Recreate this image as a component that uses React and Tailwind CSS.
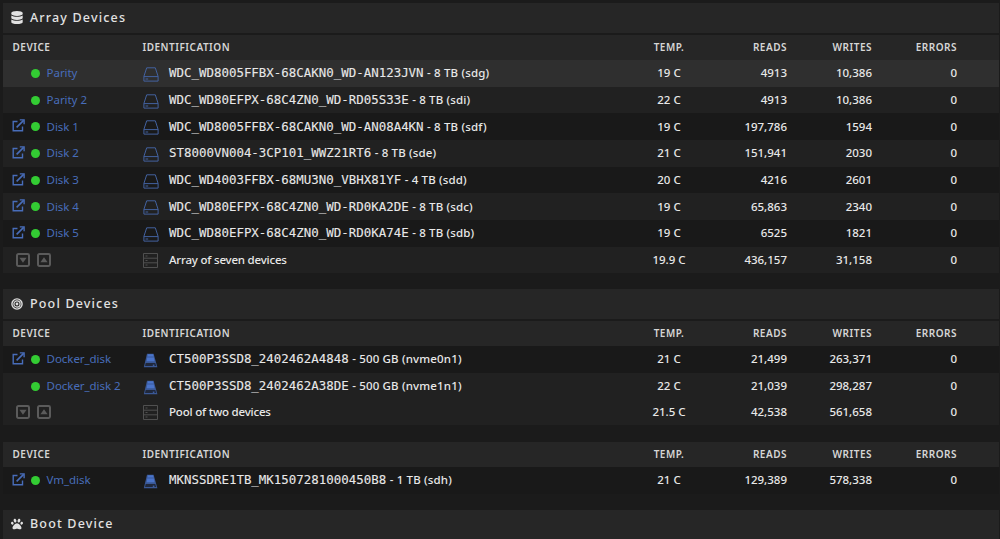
import { FaDatabase, FaPaw } from 'react-icons/fa';

const arrayDevices = [
  { name: 'Parity', serial: 'WDC_WD8005FFBX-68CAKN0_WD-AN123JVN', info: '- 8 TB (sdg)', temp: '19 C', reads: '4913', writes: '10,386', bg: 'bg-[#2f2f2f]' },
  { name: 'Parity 2', serial: 'WDC_WD80EFPX-68C4ZN0_WD-RD05S33E', info: '- 8 TB (sdi)', temp: '22 C', reads: '4913', writes: '10,386', bg: 'bg-[#212121]' },
  { name: 'Disk 1', serial: 'WDC_WD8005FFBX-68CAKN0_WD-AN08A4KN', info: '- 8 TB (sdf)', temp: '19 C', reads: '197,786', writes: '1594', bg: 'bg-[#191919]', browse: true },
  { name: 'Disk 2', serial: 'ST8000VN004-3CP101_WWZ21RT6', info: '- 8 TB (sde)', temp: '21 C', reads: '151,941', writes: '2030', bg: 'bg-[#212121]', browse: true },
  { name: 'Disk 3', serial: 'WDC_WD4003FFBX-68MU3N0_VBHX81YF', info: '- 4 TB (sdd)', temp: '20 C', reads: '4216', writes: '2601', bg: 'bg-[#191919]', browse: true },
  { name: 'Disk 4', serial: 'WDC_WD80EFPX-68C4ZN0_WD-RD0KA2DE', info: '- 8 TB (sdc)', temp: '19 C', reads: '65,863', writes: '2340', bg: 'bg-[#212121]', browse: true },
  { name: 'Disk 5', serial: 'WDC_WD80EFPX-68C4ZN0_WD-RD0KA74E', info: '- 8 TB (sdb)', temp: '19 C', reads: '6525', writes: '1821', bg: 'bg-[#191919]', browse: true },
];

const poolDevices = [
  { name: 'Docker_disk', serial: 'CT500P3SSD8_2402462A4848', info: '- 500 GB (nvme0n1)', temp: '21 C', reads: '21,499', writes: '263,371', bg: 'bg-[#191919]', browse: true, ssd: true },
  { name: 'Docker_disk 2', serial: 'CT500P3SSD8_2402462A38DE', info: '- 500 GB (nvme1n1)', temp: '22 C', reads: '21,039', writes: '298,287', bg: 'bg-[#212121]', ssd: true },
];

const vmDevices = [
  { name: 'Vm_disk', serial: 'MKNSSDRE1TB_MK1507281000450B8', info: '- 1 TB (sdh)', temp: '21 C', reads: '129,389', writes: '578,338', bg: 'bg-[#191919]', browse: true, ssd: true },
];

const columns = 'grid grid-cols-[139.5px_1fr_60px_88px_85px_85px_42px] items-center';

function BrowseIcon() {
  return (
    <svg className="size-[13px]" viewBox="0 0 13 13" fill="none" stroke="#486dba" strokeWidth="1.4">
      <path d="M5.5 2.5H1.2v9.3h9.3V7.5" />
      <path d="M4.6 8.4 11.6 1.4" strokeWidth="1.6" />
      <path d="M7.8.9h4.3v4.3" />
    </svg>
  );
}

function DiskIcon() {
  return (
    <svg className="h-[15px] w-4" viewBox="0 0 16 15" fill="none" stroke="#43629f">
      <path d="M3.7.8h8.6l2.8 8.6v4.7H.9V9.4z" />
      <path d="M.9 9.6h14.2M2.5 12h2.7" />
    </svg>
  );
}

function SsdIcon() {
  return (
    <svg className="h-[15px] w-4" viewBox="0 0 16 15">
      <path d="M4 .7h6.6l3.8 13.6H.8z" fill="#3a5896" />
      <path d="M4.9 1.3h5.2l1.5 6.9H3.6z" fill="#4a74c9" />
      <path d="M4.3 4h6.3" stroke="#304d89" strokeWidth=".7" />
      <path d="M2.7 9.9h9.6l.9 3H2z" fill="#20283b" />
      <path d="M9.8 12.2h1.6" stroke="#4a74c9" />
    </svg>
  );
}

function GroupIcon() {
  return (
    <svg className="h-[15px] w-[15px]" viewBox="0 0 15 15" fill="none" stroke="#505050">
      <path d="M.5.5h14v14H.5zM.5 5.2h14M.5 9.8h14M2.5 3h2M2.5 7.5h2M2.5 12h2" />
    </svg>
  );
}

function TargetIcon() {
  return (
    <svg className="size-3" viewBox="0 0 12 12" fill="none" stroke="#dedede">
      <circle cx="6" cy="6" r="5.1" strokeWidth="1.4" />
      <circle cx="6" cy="6" r="3.1" strokeWidth="1.2" />
      <circle cx="6" cy="6" r="1.4" fill="#dedede" stroke="none" />
    </svg>
  );
}

function ToggleIcon({ up }) {
  return (
    <svg className="size-[14px]" viewBox="0 0 14 14" fill="none" stroke="#5b5b5b" strokeWidth="2">
      <rect x="1" y="1" width="12" height="12" rx="1.4" />
      <path d={up ? 'M3.4 9.2 7 4.3 10.6 9.2z' : 'M3.4 4.8h7.2L7 9.7z'} fill="#5b5b5b" stroke="none" />
    </svg>
  );
}

function SectionTitle({ icon, children }) {
  return (
    <h2 className="flex h-[30px] items-center gap-[7px] bg-[#262626] pb-px pl-[7px] text-[12.5px] font-medium tracking-[1.17px] text-[#e2e2e2]">
      <span className="flex w-[13px] justify-center">{icon}</span>
      {children}
    </h2>
  );
}

function TableHead() {
  return (
    <div className={`${columns} h-[25px] bg-[#262626] pb-px text-[10px] font-semibold tracking-[0.5px] text-[#d6d6d6]`}>
      <span className="pl-[9.5px]">DEVICE</span>
      <span>IDENTIFICATION</span>
      <span className="text-center">TEMP.</span>
      <span className="text-right">READS</span>
      <span className="text-right">WRITES</span>
      <span className="text-right">ERRORS</span>
    </div>
  );
}

function Counters({ temp, reads, writes }) {
  return (
    <>
      <span className="text-center">{temp}</span>
      <span className="text-right">{reads}</span>
      <span className="text-right">{writes}</span>
      <span className="text-right">0</span>
    </>
  );
}

function DeviceRow({ device }) {
  return (
    <div className={`${columns} ${device.bg} h-[26.7px]`}>
      <div className="flex items-center pl-[9px] text-[#486dba]">
        <span className="mb-[2px] w-[14px]">{device.browse && <BrowseIcon />}</span>
        <span className="ml-[5px] size-[9px] rounded-full bg-[#33cc33]" />
        <span className="ml-[6.6px] font-normal tracking-[-0.05px]">{device.name}</span>
      </div>
      <div className="flex items-center">
        <span className="mt-[2px] w-[26.5px]">{device.ssd ? <SsdIcon /> : <DiskIcon />}</span>
        <span>
          <span className="font-['DejaVu_Sans_Mono',monospace] text-[12.45px] [-webkit-text-stroke:0.1px]">{device.serial}</span>
          <span className="ml-[3.5px] tracking-[0.16px]">{device.info}</span>
        </span>
      </div>
      <Counters {...device} />
    </div>
  );
}

function SummaryRow({ label, ...totals }) {
  return (
    <div className={`${columns} h-[26px] bg-[#212121]`}>
      <div className="flex gap-[7px] pl-[13px]">
        <ToggleIcon />
        <ToggleIcon up />
      </div>
      <div className="flex items-center">
        <span className="mt-px w-[26.5px]"><GroupIcon /></span>
        <span className="tracking-[-0.2px]">{label}</span>
      </div>
      <Counters {...totals} />
    </div>
  );
}

export default function App() {
  return (
    <main className="h-[539px] overflow-hidden bg-[#1b1b1b] pt-[3px] pr-px pl-[3px] font-['Noto_Sans',sans-serif] text-[11.5px] leading-4 font-medium whitespace-nowrap text-[#e8e8e8]">
      <section className="h-[286.4px]">
        <SectionTitle icon={<FaDatabase className="h-[13px] w-3" />}>Array Devices</SectionTitle>
        <div className="mt-[2px]">
          <TableHead />
          {arrayDevices.map((device) => <DeviceRow key={device.name} device={device} />)}
          <SummaryRow label="Array of seven devices" temp="19.9 C" reads="436,157" writes="31,158" />
        </div>
      </section>

      <section className="h-[152.6px]">
        <SectionTitle icon={<TargetIcon />}>Pool Devices</SectionTitle>
        <div className="mt-[1.6px]">
          <TableHead />
          {poolDevices.map((device) => <DeviceRow key={device.name} device={device} />)}
          <SummaryRow label="Pool of two devices" temp="21.5 C" reads="42,538" writes="561,658" />
        </div>
      </section>

      <section className="h-[68px]">
        <TableHead />
        {vmDevices.map((device) => <DeviceRow key={device.name} device={device} />)}
      </section>

      <SectionTitle icon={<FaPaw className="size-3" />}>Boot Device</SectionTitle>
    </main>
  );
}
